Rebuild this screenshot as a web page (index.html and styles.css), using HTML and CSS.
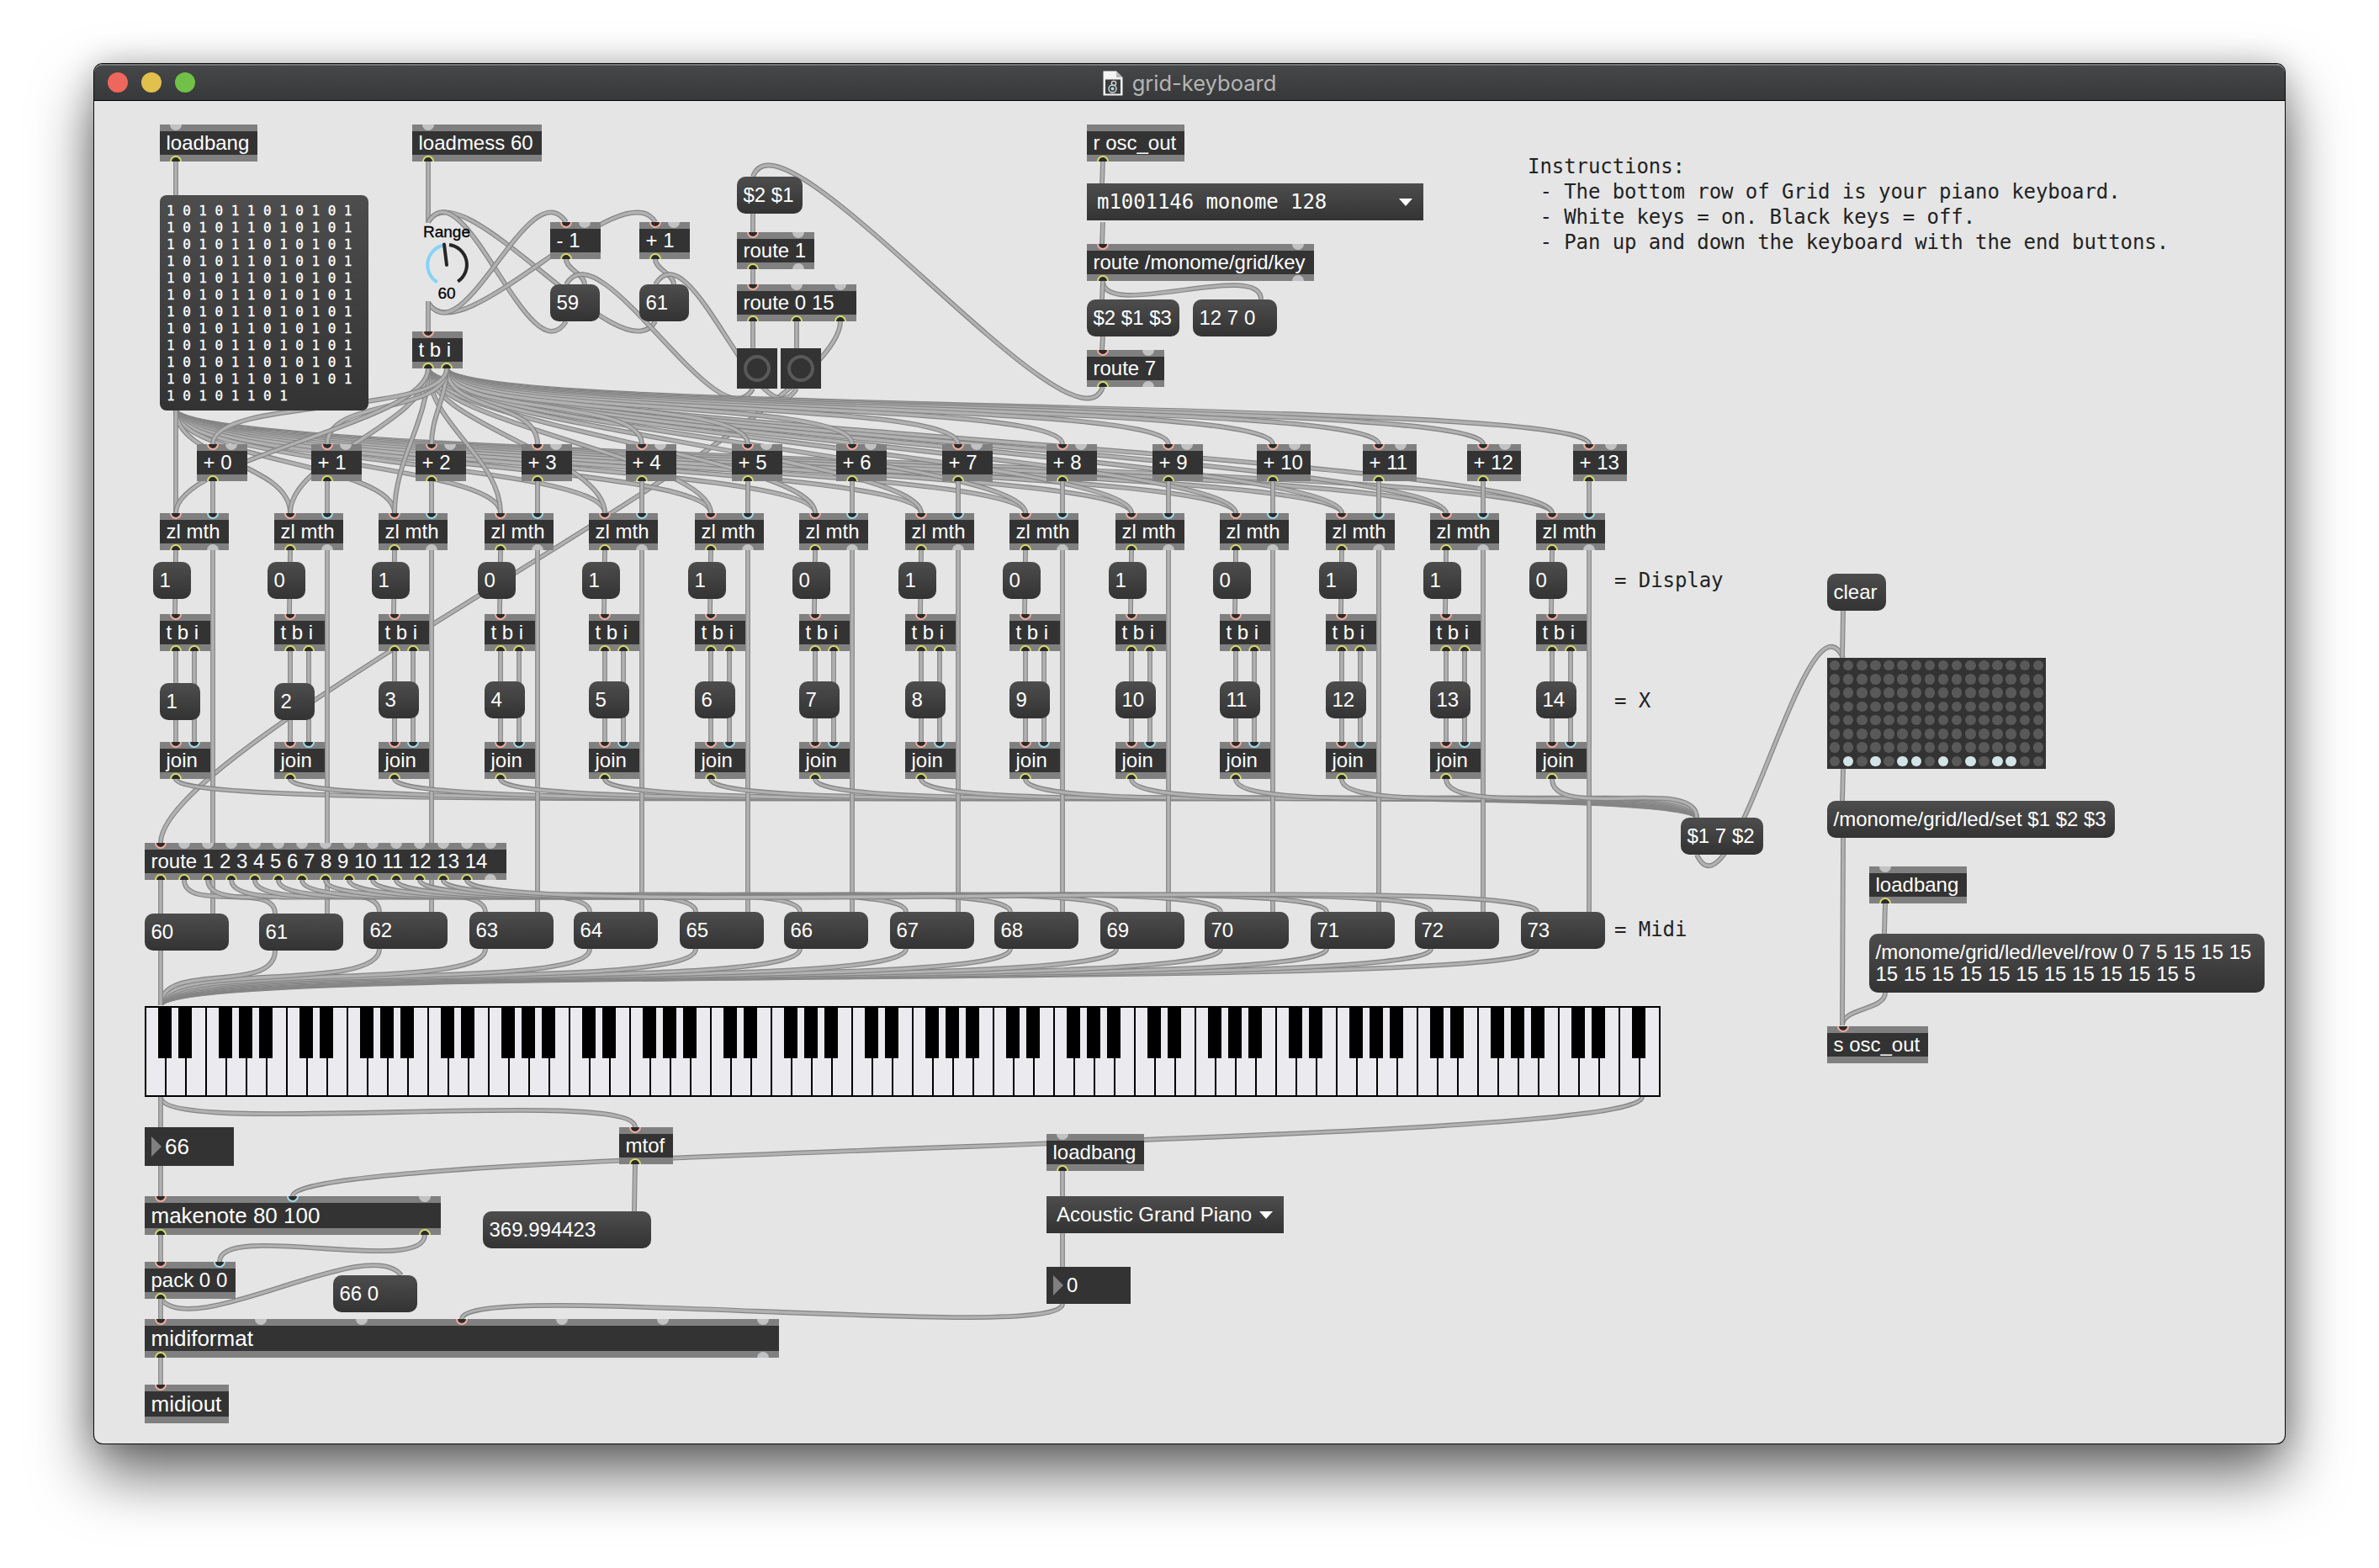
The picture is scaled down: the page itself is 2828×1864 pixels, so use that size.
FILE: index.html
```html
<!DOCTYPE html>
<html lang="en">
<head>
<meta charset="utf-8">
<title>grid-keyboard</title>
<link rel="stylesheet" href="styles.css">
</head>
<body>
<main class="window">
  <header class="titlebar">
    <div class="lights">
      <span class="light light-close"></span>
      <span class="light light-min"></span>
      <span class="light light-zoom"></span>
    </div>
    <div class="title">
      <svg class="doc-icon" width="24" height="30" viewBox="0 0 24 30" aria-hidden="true">
        <path d="M0.5 0.5H16L23.5 8V29.500H0.500Z" fill="#f4f4f4"/>
        <path d="M16 0.500V8H23.500Z" fill="#b9b9b9"/>
        <rect x="3" y="10.500" width="18" height="17" fill="#3a3d3e"/>
        <circle cx="13" cy="15" r="2.600" fill="none" stroke="#d8d8d8" stroke-width="1.400"/>
        <circle cx="11.500" cy="21.500" r="4.500" fill="none" stroke="#d8d8d8" stroke-width="1.400"/>
        <circle cx="11.500" cy="21.500" r="2" fill="#a9dcec"/>
      </svg>
      <span class="title-text">grid-keyboard</span>
    </div>
  </header>
  <section class="patch" id="patch">
    <svg class="cords" id="cords" viewBox="112 120 2604 1596" width="2604" height="1596"></svg>
    <svg class="knob" viewBox="0 0 60 60" width="60" height="60">
      <path d="M17.300 49.500A24 24 0 0 1 25 6.800" fill="none" stroke="#84d3f8" stroke-width="4" stroke-linecap="round"/>
      <path d="M33 5.900A24 24 0 0 1 43.200 49.700" fill="none" stroke="#262626" stroke-width="4"/>
      <path d="M30 30L27 5.500" stroke="#262626" stroke-width="4" stroke-linecap="round"/>
    </svg>
  </section>
</main>
<script src="patch.js"></script>
</body>
</html>
```
FILE: styles.css
```css
*, *::before, *::after { box-sizing: border-box; }

body {
  margin: 0;
  width: 2828px;
  height: 1864px;
  padding: 76px 112px 0;
  background: #fff;
  overflow: hidden;
  font-family: "Liberation Sans", Arial, sans-serif;
  font-size: 24px;
  color: #fff;
}

.window {
  width: 2604px;
  height: 1640px;
  display: flex;
  flex-direction: column;
  border-radius: 10px;
  background: #e5e5e5;
  box-shadow: 0 0 0 1px #0a0a0a, 0 36px 72px rgba(0, 0, 0, .6), 0 0 36px rgba(0, 0, 0, .22);
}

.titlebar {
  height: 44px;
  flex: none;
  position: relative;
  display: flex;
  align-items: center;
  justify-content: center;
  border-radius: 10px 10px 0 0;
  border-top: 2px solid #767877;
  border-bottom: 1px solid #000;
  background: linear-gradient(#454748, #373839);
}

.lights { position: absolute; left: 16px; top: 8px; display: flex; gap: 16px; }
.light { width: 24px; height: 24px; border-radius: 50%; }
.light-close { background: #ee675c; }
.light-min { background: #e1c04c; }
.light-zoom { background: #71c048; }

.title { display: flex; align-items: center; gap: 11px; }
.title-text {
  font-family: Inter, sans-serif;
  font-size: 25.500px;
  line-height: 30px;
  color: #b4b5b5;
}

.patch { position: relative; flex: 1; }
.cords { position: absolute; left: 0; top: 0; border-radius: 0 0 10px 10px; }
.cord-edge { fill: none; stroke: #858585; stroke-width: 5.8; }
.cord-core { fill: none; stroke: #b1b1b1; stroke-width: 3.4; }

.node { position: absolute; height: 44px; padding: 9px 7.500px; line-height: 26px; white-space: pre; }
.object {
  border-top: 8px solid #808080;
  border-bottom: 8px solid #808080;
  padding-top: 0;
  padding-bottom: 0;
  line-height: 28px;
  background: #333;
}
.message { border-radius: 10px; background: linear-gradient(#4d4d4d, #333); }
.large { height: 46px; font-size: 26px; line-height: 30px; }

.list {
  height: 256px;
  padding: 9px 8px;
  border-radius: 8px;
  font: 16px/20px "DejaVu Sans Mono", monospace;
  letter-spacing: -.05px;
  -webkit-text-stroke: .3px #fff;
}
.two-line { height: 70px; }

.menu {
  display: flex;
  align-items: center;
  justify-content: space-between;
  padding: 0 13px 0 12px;
  background: linear-gradient(#4d4d4d, #333);
}
.menu::after {
  content: "";
  border: 8.500px solid transparent;
  border-top: 9px solid #fff;
  border-bottom: 0;
}
.mono { font-family: "DejaVu Sans Mono", monospace; letter-spacing: -.07px; }

.number { display: flex; align-items: center; gap: 4px; padding: 0 8px; background: #333; }
.number::before {
  content: "";
  border: 12px solid transparent;
  border-left-color: #808080;
  border-right: 0;
}

.button { width: 48px; height: 48px; padding: 8px; background: #333; }
.button::before {
  content: "";
  display: block;
  width: 32px;
  height: 32px;
  border: 4px solid #595959;
  border-radius: 50%;
}

.comment {
  padding: 0;
  height: auto;
  color: #222;
  font: 24px/30px "DejaVu Sans Mono", monospace;
  letter-spacing: -.07px;
}
.label {
  padding: 0;
  height: 24px;
  line-height: 24px;
  font-size: 19px;
  text-align: center;
  color: #000;
  -webkit-text-stroke: .3px #000;
}

.port { position: absolute; width: 14px; height: 7px; background: #c1c2c4; }
.inlet { top: -8px; border-radius: 0 0 7px 7px; }
.outlet { bottom: -8px; border-radius: 7px 7px 0 0; }
.hot, .cold { border: 2px solid #f3ab9c; border-top: 0; background: #2b2b2b; }
.cold { border-color: #9edaea; }
.live { border: 2px solid #d6dc6b; border-bottom: 0; background: #2b2b2b; }

.knob { position: absolute; left: 389px; top: 165px; }

.keyboard {
  display: flex;
  width: 1802px;
  height: 108px;
  padding: 0;
  border: 2px solid #000;
  background: #eaeaef;
}
.key { position: relative; flex: none; width: 24px; border-right: 2px solid #000; }
.key:last-child { width: 22px; border-right: 0; }
.sharp::after {
  content: "";
  position: absolute;
  z-index: 1;
  left: 14px;
  top: 0;
  width: 16px;
  height: 60px;
  background: #000;
}

.matrix {
  display: grid;
  grid-template-columns: repeat(16, 1fr);
  grid-template-rows: repeat(8, 1fr);
  place-items: center;
  width: 260px;
  height: 132px;
  padding: 1px;
  background: #333;
}
.led { width: 12.400px; height: 12.400px; border-radius: 50%; background: #595959; }
.led-on { background: #d2e4e8; }
```
FILE: patch.js
```js
const ORIGIN = { x: 112, y: 120 };
const patch = document.getElementById('patch');
const cords = document.getElementById('cords');

const PORT_CLASS = { r: 'hot', b: 'cold', y: 'live', '-': 'idle' };

// Ports spread evenly between 19px from either edge of the box.
function portX(i, count, w) {
  return count < 2 ? 19 : 19 + (w - 38) * i / (count - 1);
}

function node(kind, x, y, w, text = '', inlets = '', outlets = '') {
  const el = document.createElement('div');
  el.className = 'node ' + kind;
  el.style.left = x - ORIGIN.x + 'px';
  el.style.top = y - ORIGIN.y + 'px';
  if (w) el.style.width = w + 'px';
  el.textContent = text;
  const addPorts = (spec, side) => [...spec].forEach((p, i) => {
    const port = document.createElement('span');
    port.className = `port ${side} ${PORT_CLASS[p]}`;
    port.style.left = portX(i, spec.length, w) - 7 + 'px';
    el.append(port);
  });
  addPorts(inlets, 'inlet');
  addPorts(outlets, 'outlet');
  patch.append(el);
  return el;
}
const object = (...args) => node('object', ...args);
const message = (...args) => node('message', ...args);

// S-shaped cord: leaves downward, arrives from above.
function cord(x1, y1, x2, y2) {
  const dx = x2 - x1;
  const dy = y2 - y1;
  let d = `M${x1} ${y1}L${x2} ${y2}`;
  if (Math.abs(dx) > 3) {
    const reach = Math.min(1, Math.hypot(dx, dy) / 150);
    const a = (45 + (dy < 0 ? -0.2 : 0.12) * dy) * reach;
    const b = dy < 0 ? Math.sign(dx) * (50 - 0.04 * Math.abs(dx)) * reach : 0;
    d = `M${x1} ${y1}C${x1 + b} ${y1 + a} ${x2 - b} ${y2 - a} ${x2} ${y2}`;
  }
  for (const cls of ['cord-edge', 'cord-core']) {
    const p = document.createElementNS('http://www.w3.org/2000/svg', 'path');
    p.setAttribute('class', cls);
    p.setAttribute('d', d);
    cords.append(p);
  }
}

const X = [190, 326, 450, 576, 700, 826, 950, 1076, 1200, 1326, 1450, 1576, 1700, 1826];
const DISPLAY = [1, 0, 1, 0, 1, 1, 0, 1, 0, 1, 0, 1, 1, 0];
const SCALE = '1 0 1 0 1 1 0 1 0 1 0 1\n'.repeat(11) + '1 0 1 0 1 1 0 1';

// Cords
cord(209, 192, 209, 232);
cord(509, 192, 509, 265);
cord(779, 382, 509, 264);
cord(673, 382, 509, 264);
cord(509, 360, 779, 264);
cord(509, 360, 673, 264);
cord(509, 358, 509, 394);
cord(673, 308, 695, 338);
cord(779, 308, 801, 338);
cord(999, 382, 191, 1002);
cord(895, 462, 673, 338);
cord(947, 462, 779, 338);
cord(1311, 460, 895, 210);
cord(895, 254, 895, 276);
cord(895, 320, 895, 338);
cord(895, 382, 895, 414);
cord(947, 382, 947, 414);
cord(1311, 192, 1310, 218);
cord(1311, 264, 1310, 290);
cord(1311, 334, 1499, 356);
cord(1311, 334, 1310, 356);
cord(1311, 400, 1310, 416);
for (let i = 13; i >= 0; i--) {
  cord(209, 487, X[i] + 19, 610);
  cord(509, 438, X[i] + 19, 610);
  cord(531, 438, X[i] + 63, 528);
}
for (let i = 13; i >= 0; i--) cord(X[i] + 1, i < 2 ? 1130 : 1128, 191, 1195);
X.forEach((x, i) => {
  cord(x + 63, 572, x + 63, i < 2 ? 1086 : 1084);
  cord(x + 19, 654, x + 18, 730);
  cord(x + 19, 774, x + 19, 882);
  cord(x + 41, 774, x + 41, 882);
  cord(x + 19, 926, 2017, 972);
  cord(191 + 28 * i, 1046, x + 1, i < 2 ? 1086 : 1084);
});
cord(2017, 1016, 2191, 782);
cord(2191, 726, 2190, 782);
cord(2191, 914, 2190, 952);
cord(2241, 1180, 2190, 1219);
cord(2191, 996, 2190, 1219);
cord(2241, 1074, 2240, 1110);
cord(191, 1304, 755, 1340);
cord(191, 1304, 191, 1340);
cord(1952, 1304, 348, 1422);
cord(191, 1386, 191, 1422);
cord(755, 1384, 754, 1440);
cord(505, 1468, 261, 1500);
cord(191, 1468, 191, 1500);
cord(191, 1544, 477, 1516);
cord(191, 1544, 191, 1568);
cord(191, 1614, 191, 1646);
cord(1263, 1392, 1263, 1422);
cord(1263, 1466, 1263, 1506);
cord(1263, 1550, 549, 1568);

// Range control
object(190, 148, 116, 'loadbang', '-', 'y');
node('message list', 190, 232, 248, SCALE);
object(490, 148, 154, 'loadmess 60', '-', 'y');
node('label', 491, 264, 80, 'Range');
node('label', 491, 337, 80, '60');
object(490, 394, 60, 't b i', 'r', 'yy');
object(654, 264, 60, '- 1', 'r-', 'y');
object(760, 264, 60, '+ 1', 'r-', 'y');
message(654, 338, 59, '59');
message(760, 338, 59, '61');

// Key routing
message(876, 210, 78, '$2 $1');
object(876, 276, 92, 'route 1', 'r-', 'y-');
object(876, 338, 142, 'route 0 15', 'r--', 'yyy');
node('button', 876, 414, 48);
node('button', 928, 414, 48);
object(1292, 148, 116, 'r osc_out', '', 'y');
node('menu mono', 1292, 218, 400, 'm1001146 monome 128');
object(1292, 290, 270, 'route /monome/grid/key', 'r-', 'y-');
message(1292, 356, 110, '$2 $1 $3');
message(1418, 356, 100, '12 7 0');
object(1292, 416, 92, 'route 7', 'r-', 'y-');

// One column per playable note
X.forEach((x, i) => {
  object(x + 44, 528, i < 10 ? 60 : 64, '+ ' + i, 'r-', 'y');
  object(x, 610, 82, 'zl mth', 'rb', 'y-');
  message(x - 8, 668, 45, String(DISPLAY[i]));
  object(x, 730, 60, 't b i', 'r', 'yy');
  message(x, i < 2 ? 812 : 810, 48, String(i + 1));
  object(x, 882, 60, 'join', 'rb', 'y');
  message(x - 18, i < 2 ? 1086 : 1084, 100, String(60 + i));
});
object(172, 1002, 430, 'route 1 2 3 4 5 6 7 8 9 10 11 12 13 14', 'r' + '-'.repeat(14), 'y'.repeat(14) + '-');

// Grid output
message(1998, 972, 98, '$1 7 $2');
message(2172, 682, 70, 'clear');
const matrix = node('matrix', 2172, 782, 260);
for (let i = 0; i < 128; i++) {
  const led = document.createElement('i');
  led.className = i > 111 && [1, 3, 5, 6, 8, 10, 12, 13].includes(i - 112) ? 'led led-on' : 'led';
  matrix.append(led);
}
message(2172, 952, 342, '/monome/grid/led/set $1 $2 $3');
object(2222, 1030, 116, 'loadbang', '-', 'y');
node('message two-line', 2222, 1110, 470,
  '/monome/grid/led/level/row 0 7 5 15 15 15\n15 15 15 15 15 15 15 15 15 15 15 5');
object(2172, 1220, 120, 's osc_out', 'r', '');

// Midi output
const keyboard = node('keyboard', 172, 1196, 1802);
for (let i = 0; i < 75; i++) {
  const key = document.createElement('i');
  key.className = i < 74 && [0, 1, 3, 4, 5].includes(i % 7) ? 'key sharp' : 'key';
  keyboard.append(key);
}
node('number large', 172, 1340, 106, '66');
object(736, 1340, 64, 'mtof', 'r', 'y');
node('object large', 172, 1422, 352, 'makenote 80 100', 'rb-', 'yy');
message(574, 1440, 200, '369.994423');
object(172, 1500, 108, 'pack 0 0', 'rb', 'y');
message(396, 1516, 100, '66 0');
node('object large', 172, 1568, 754, 'midiformat', 'r--r---', 'y-');
node('object large', 172, 1646, 100, 'midiout', 'r', '');
object(1244, 1348, 116, 'loadbang', '-', 'y');
node('menu', 1244, 1422, 282, 'Acoustic Grand Piano');
node('number', 1244, 1506, 100, '0');

// Notes
node('comment', 1816, 183, 0,
  'Instructions:\n - The bottom row of Grid is your piano keyboard.\n - White keys = on. Black keys = off.\n - Pan up and down the keyboard with the end buttons.');
node('comment', 1919, 675, 0, '= Display');
node('comment', 1919, 818, 0, '= X');
node('comment', 1919, 1090, 0, '= Midi');
```
